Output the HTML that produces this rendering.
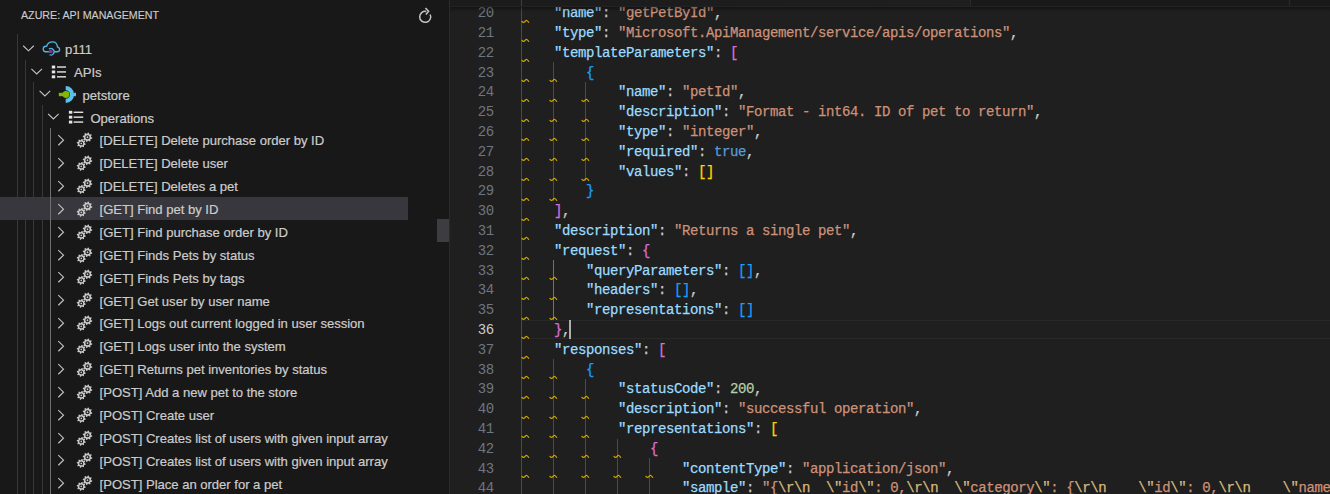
<!DOCTYPE html>
<html><head><meta charset="utf-8"><style>
*{margin:0;padding:0;box-sizing:border-box}
html,body{width:1330px;height:494px;overflow:hidden;background:#181818}
body{position:relative;font-family:"Liberation Sans",sans-serif}
#side{position:absolute;left:0;top:0;width:449px;height:494px;background:#181818;overflow:hidden}
#sborder{position:absolute;left:449px;top:0;width:1px;height:494px;background:#2b2b2b}
.hdr{position:absolute;left:21px;top:7.0px;font-size:11.6px;line-height:16px;color:#cccccc;letter-spacing:0px;transform:scaleX(0.92);transform-origin:0 0;-webkit-text-stroke:0.15px currentColor;white-space:nowrap}
.refresh{position:absolute;left:410px;top:0px}
.row{position:absolute;left:0;width:449px;height:22.88px}
.rsvg{position:absolute;left:0;top:0;overflow:visible}
.lbl{position:absolute;top:2.3px;-webkit-text-stroke:0.2px currentColor;font-size:13.1px;letter-spacing:-0.03px;line-height:22.88px;color:#cccccc;white-space:nowrap}
.hover{position:absolute;left:0;width:408px;height:22.88px;background:#37373d}
.tguide{position:absolute;width:1px}
.slider{position:absolute;left:437px;top:219.1px;width:12px;height:22.7px;background:#3c3c41}
#ed{position:absolute;left:450px;top:0;width:880px;height:494px;background:#1f1f1f;overflow:hidden}
#edc{position:absolute;left:-450px;top:0;width:1330px;height:494px}
.lnum{position:absolute;left:450px;width:43.7px;text-align:right;font-family:"Liberation Mono",monospace;font-size:14px;letter-spacing:-0.4px;line-height:19.8px;color:#6e7681;height:19.8px}
.lnum.act{color:#cccccc}
.code{position:absolute;white-space:pre;-webkit-text-stroke:0.25px currentColor;font-family:"Liberation Mono",monospace;font-size:14px;letter-spacing:-0.4px;line-height:19.8px;color:#cccccc;height:19.8px}
.k{color:#9cdcfe} .s{color:#ce9178} .e{color:#d7ba7d} .n{color:#b5cea8} .b{color:#569cd6}
.sq{position:absolute;overflow:visible}
.guide{position:absolute;width:1px}
.curline{position:absolute;left:522px;width:808px;height:19.8px;border-top:1px solid #282828;border-bottom:1px solid #282828}
.cursor{position:absolute;width:2px;background:#aeafad}
.band{position:absolute;left:450px;top:0;width:880px;height:6px;background:linear-gradient(90deg,#1b1b1b 0px,#1e1e1e 450px,#1f1f1f 520px,#191919 520px)}
.bandline{position:absolute;left:450px;top:6px;width:880px;height:1px;background:#232323}
.shadow{position:absolute;left:450px;top:7px;width:880px;height:5px;background:linear-gradient(rgba(0,0,0,0.35),rgba(0,0,0,0))}
</style></head><body>
<div id="side">
<div class="hdr">AZURE: API MANAGEMENT</div>
<svg class="refresh" width="30" height="30" viewBox="410 0 30 30"><path d="M430.18 14.53 A5.5 5.5 0 1 1 426.25 11.45" fill="none" stroke="#c5c5c5" stroke-width="1.5"/><path d="M425.4 7.9 L428.6 11.3 L425.9 14.4" fill="none" stroke="#c5c5c5" stroke-width="1.5"/></svg>
<div class="hover" style="top:196.80px"></div>
<div class="tguide" style="left:17px;top:34.4px;height:460px;background:#383838"></div>
<div class="tguide" style="left:25px;top:59.52px;height:460px;background:#383838"></div>
<div class="tguide" style="left:33px;top:82.40px;height:460px;background:#383838"></div>
<div class="tguide" style="left:41.5px;top:105.28px;height:460px;background:#383838"></div>
<div class="tguide" style="left:50px;top:128.16px;height:460px;background:#707070"></div>
<div class="row" style="top:36.64px"><svg class="rsvg" width="100" height="23" viewBox="0 0 100 23"><path d="M23.20 8.76 L28.50 13.86 L33.80 8.76" fill="none" stroke="#c5c5c5" stroke-width="1.1"/><path d="M49.20 14.76 L45.60 14.76 C44.00 14.76 43.20 13.56 43.20 12.06 C43.20 10.46 44.50 9.26 46.20 9.26 L46.70 9.26 C47.30 6.76 49.60 4.86 52.50 4.86 C55.30 4.86 57.20 6.96 57.40 9.86 C58.70 10.16 59.60 11.26 59.60 12.56 C59.60 13.86 58.60 14.76 57.30 14.76 L54.20 14.76" fill="none" stroke="#4db6e2" stroke-width="1.3" stroke-linejoin="round"/><path d="M48.91 12.06 A3.3 3.3 0 1 1 49.41 17.75" fill="none" stroke="#4db6e2" stroke-width="1.3"/><circle cx="50.7" cy="14.46" r="1.85" fill="#8b2c9f"/></svg><div class="lbl" style="left:64.9px">p111</div></div><div class="row" style="top:59.52px"><svg class="rsvg" width="100" height="23" viewBox="0 0 100 23"><path d="M31.40 8.78 L36.70 13.88 L42.00 8.78" fill="none" stroke="#c5c5c5" stroke-width="1.1"/><rect x="51.80" y="5.58" width="3.4" height="2.9" fill="#e6e6e6"/><rect x="57.00" y="6.33" width="9.00" height="1.4" fill="#e6e6e6"/><rect x="51.80" y="10.48" width="3.4" height="2.9" fill="#e6e6e6"/><rect x="57.00" y="11.23" width="9.00" height="1.4" fill="#e6e6e6"/><rect x="51.80" y="15.38" width="3.4" height="2.9" fill="#e6e6e6"/><rect x="57.00" y="16.13" width="9.00" height="1.4" fill="#e6e6e6"/></svg><div class="lbl" style="left:74.1px">APIs</div></div><div class="row" style="top:82.40px"><svg class="rsvg" width="100" height="23" viewBox="0 0 100 23"><path d="M39.60 8.90 L44.90 14.00 L50.20 8.90" fill="none" stroke="#c5c5c5" stroke-width="1.1"/><path d="M65.70 4.10 A8.4 8.4 0 0 1 74.10 12.50 A8.4 8.4 0 0 1 65.70 20.90 L65.70 16.80 A4.3 4.3 0 0 0 65.70 8.20 Z" fill="#5bc1ea"/><rect x="73.6" y="10.80" width="2.4" height="3.4" fill="#5bc1ea"/><rect x="58.8" y="10.80" width="5" height="3.4" fill="#7fba00"/><circle cx="66.0" cy="12.50" r="3.45" fill="#7fba00"/></svg><div class="lbl" style="left:82.6px">petstore</div></div><div class="row" style="top:105.28px"><svg class="rsvg" width="100" height="23" viewBox="0 0 100 23"><path d="M48.10 8.82 L53.40 13.92 L58.70 8.82" fill="none" stroke="#c5c5c5" stroke-width="1.1"/><rect x="68.90" y="5.82" width="3.4" height="2.9" fill="#e6e6e6"/><rect x="73.60" y="6.57" width="9.60" height="1.4" fill="#e6e6e6"/><rect x="68.90" y="10.72" width="3.4" height="2.9" fill="#e6e6e6"/><rect x="73.60" y="11.47" width="9.60" height="1.4" fill="#e6e6e6"/><rect x="68.90" y="15.62" width="3.4" height="2.9" fill="#e6e6e6"/><rect x="73.60" y="16.37" width="9.60" height="1.4" fill="#e6e6e6"/></svg><div class="lbl" style="left:90.4px">Operations</div></div><div class="row" style="top:128.16px"><svg class="rsvg" width="100" height="23" viewBox="0 0 100 23"><path d="M58.30 7.14 L63.50 12.19 L58.30 17.24" fill="none" stroke="#c5c5c5" stroke-width="1.1"/><path d="M87.97 4.46 L88.89 4.65 L89.20 6.07 L89.78 6.46 L91.21 6.19 L91.73 6.98 L90.94 8.19 L91.08 8.89 L92.28 9.71 L92.09 10.63 L90.67 10.94 L90.28 11.52 L90.55 12.95 L89.76 13.47 L88.55 12.68 L87.85 12.82 L87.03 14.02 L86.11 13.83 L85.80 12.41 L85.22 12.02 L83.79 12.29 L83.27 11.50 L84.06 10.29 L83.92 9.59 L82.72 8.77 L82.91 7.85 L84.33 7.54 L84.72 6.96 L84.45 5.53 L85.24 5.01 L86.45 5.80 L87.15 5.66 Z M89.60 9.24 A2.1 2.1 0 1 0 85.40 9.24 A2.1 2.1 0 1 0 89.60 9.24 Z" fill="#c8c8c8" fill-rule="evenodd"/><circle cx="87.5" cy="9.24" r="0.9" fill="#c8c8c8"/><path d="M81.69 10.91 L82.56 11.08 L82.83 12.44 L83.38 12.80 L84.73 12.54 L85.22 13.27 L84.46 14.42 L84.58 15.06 L85.73 15.83 L85.56 16.70 L84.20 16.97 L83.84 17.52 L84.10 18.87 L83.37 19.36 L82.22 18.60 L81.58 18.72 L80.81 19.87 L79.94 19.70 L79.67 18.34 L79.12 17.98 L77.77 18.24 L77.28 17.51 L78.04 16.36 L77.92 15.72 L76.77 14.95 L76.94 14.08 L78.30 13.81 L78.66 13.26 L78.40 11.91 L79.13 11.42 L80.28 12.18 L80.92 12.06 Z M83.20 15.39 A1.95 1.95 0 1 0 79.30 15.39 A1.95 1.95 0 1 0 83.20 15.39 Z" fill="#c8c8c8" fill-rule="evenodd"/><circle cx="81.25" cy="15.39" r="0.85" fill="#c8c8c8"/></svg><div class="lbl" style="left:99.6px">[DELETE] Delete purchase order by ID</div></div><div class="row" style="top:151.04px"><svg class="rsvg" width="100" height="23" viewBox="0 0 100 23"><path d="M58.30 7.14 L63.50 12.19 L58.30 17.24" fill="none" stroke="#c5c5c5" stroke-width="1.1"/><path d="M87.97 4.46 L88.89 4.65 L89.20 6.07 L89.78 6.46 L91.21 6.19 L91.73 6.98 L90.94 8.19 L91.08 8.89 L92.28 9.71 L92.09 10.63 L90.67 10.94 L90.28 11.52 L90.55 12.95 L89.76 13.47 L88.55 12.68 L87.85 12.82 L87.03 14.02 L86.11 13.83 L85.80 12.41 L85.22 12.02 L83.79 12.29 L83.27 11.50 L84.06 10.29 L83.92 9.59 L82.72 8.77 L82.91 7.85 L84.33 7.54 L84.72 6.96 L84.45 5.53 L85.24 5.01 L86.45 5.80 L87.15 5.66 Z M89.60 9.24 A2.1 2.1 0 1 0 85.40 9.24 A2.1 2.1 0 1 0 89.60 9.24 Z" fill="#c8c8c8" fill-rule="evenodd"/><circle cx="87.5" cy="9.24" r="0.9" fill="#c8c8c8"/><path d="M81.69 10.91 L82.56 11.08 L82.83 12.44 L83.38 12.80 L84.73 12.54 L85.22 13.27 L84.46 14.42 L84.58 15.06 L85.73 15.83 L85.56 16.70 L84.20 16.97 L83.84 17.52 L84.10 18.87 L83.37 19.36 L82.22 18.60 L81.58 18.72 L80.81 19.87 L79.94 19.70 L79.67 18.34 L79.12 17.98 L77.77 18.24 L77.28 17.51 L78.04 16.36 L77.92 15.72 L76.77 14.95 L76.94 14.08 L78.30 13.81 L78.66 13.26 L78.40 11.91 L79.13 11.42 L80.28 12.18 L80.92 12.06 Z M83.20 15.39 A1.95 1.95 0 1 0 79.30 15.39 A1.95 1.95 0 1 0 83.20 15.39 Z" fill="#c8c8c8" fill-rule="evenodd"/><circle cx="81.25" cy="15.39" r="0.85" fill="#c8c8c8"/></svg><div class="lbl" style="left:99.6px">[DELETE] Delete user</div></div><div class="row" style="top:173.92px"><svg class="rsvg" width="100" height="23" viewBox="0 0 100 23"><path d="M58.30 7.14 L63.50 12.19 L58.30 17.24" fill="none" stroke="#c5c5c5" stroke-width="1.1"/><path d="M87.97 4.46 L88.89 4.65 L89.20 6.07 L89.78 6.46 L91.21 6.19 L91.73 6.98 L90.94 8.19 L91.08 8.89 L92.28 9.71 L92.09 10.63 L90.67 10.94 L90.28 11.52 L90.55 12.95 L89.76 13.47 L88.55 12.68 L87.85 12.82 L87.03 14.02 L86.11 13.83 L85.80 12.41 L85.22 12.02 L83.79 12.29 L83.27 11.50 L84.06 10.29 L83.92 9.59 L82.72 8.77 L82.91 7.85 L84.33 7.54 L84.72 6.96 L84.45 5.53 L85.24 5.01 L86.45 5.80 L87.15 5.66 Z M89.60 9.24 A2.1 2.1 0 1 0 85.40 9.24 A2.1 2.1 0 1 0 89.60 9.24 Z" fill="#c8c8c8" fill-rule="evenodd"/><circle cx="87.5" cy="9.24" r="0.9" fill="#c8c8c8"/><path d="M81.69 10.91 L82.56 11.08 L82.83 12.44 L83.38 12.80 L84.73 12.54 L85.22 13.27 L84.46 14.42 L84.58 15.06 L85.73 15.83 L85.56 16.70 L84.20 16.97 L83.84 17.52 L84.10 18.87 L83.37 19.36 L82.22 18.60 L81.58 18.72 L80.81 19.87 L79.94 19.70 L79.67 18.34 L79.12 17.98 L77.77 18.24 L77.28 17.51 L78.04 16.36 L77.92 15.72 L76.77 14.95 L76.94 14.08 L78.30 13.81 L78.66 13.26 L78.40 11.91 L79.13 11.42 L80.28 12.18 L80.92 12.06 Z M83.20 15.39 A1.95 1.95 0 1 0 79.30 15.39 A1.95 1.95 0 1 0 83.20 15.39 Z" fill="#c8c8c8" fill-rule="evenodd"/><circle cx="81.25" cy="15.39" r="0.85" fill="#c8c8c8"/></svg><div class="lbl" style="left:99.6px">[DELETE] Deletes a pet</div></div><div class="row" style="top:196.80px"><svg class="rsvg" width="100" height="23" viewBox="0 0 100 23"><path d="M58.30 7.14 L63.50 12.19 L58.30 17.24" fill="none" stroke="#c5c5c5" stroke-width="1.1"/><path d="M87.97 4.46 L88.89 4.65 L89.20 6.07 L89.78 6.46 L91.21 6.19 L91.73 6.98 L90.94 8.19 L91.08 8.89 L92.28 9.71 L92.09 10.63 L90.67 10.94 L90.28 11.52 L90.55 12.95 L89.76 13.47 L88.55 12.68 L87.85 12.82 L87.03 14.02 L86.11 13.83 L85.80 12.41 L85.22 12.02 L83.79 12.29 L83.27 11.50 L84.06 10.29 L83.92 9.59 L82.72 8.77 L82.91 7.85 L84.33 7.54 L84.72 6.96 L84.45 5.53 L85.24 5.01 L86.45 5.80 L87.15 5.66 Z M89.60 9.24 A2.1 2.1 0 1 0 85.40 9.24 A2.1 2.1 0 1 0 89.60 9.24 Z" fill="#c8c8c8" fill-rule="evenodd"/><circle cx="87.5" cy="9.24" r="0.9" fill="#c8c8c8"/><path d="M81.69 10.91 L82.56 11.08 L82.83 12.44 L83.38 12.80 L84.73 12.54 L85.22 13.27 L84.46 14.42 L84.58 15.06 L85.73 15.83 L85.56 16.70 L84.20 16.97 L83.84 17.52 L84.10 18.87 L83.37 19.36 L82.22 18.60 L81.58 18.72 L80.81 19.87 L79.94 19.70 L79.67 18.34 L79.12 17.98 L77.77 18.24 L77.28 17.51 L78.04 16.36 L77.92 15.72 L76.77 14.95 L76.94 14.08 L78.30 13.81 L78.66 13.26 L78.40 11.91 L79.13 11.42 L80.28 12.18 L80.92 12.06 Z M83.20 15.39 A1.95 1.95 0 1 0 79.30 15.39 A1.95 1.95 0 1 0 83.20 15.39 Z" fill="#c8c8c8" fill-rule="evenodd"/><circle cx="81.25" cy="15.39" r="0.85" fill="#c8c8c8"/></svg><div class="lbl" style="left:99.6px">[GET] Find pet by ID</div></div><div class="row" style="top:219.68px"><svg class="rsvg" width="100" height="23" viewBox="0 0 100 23"><path d="M58.30 7.14 L63.50 12.19 L58.30 17.24" fill="none" stroke="#c5c5c5" stroke-width="1.1"/><path d="M87.97 4.46 L88.89 4.65 L89.20 6.07 L89.78 6.46 L91.21 6.19 L91.73 6.98 L90.94 8.19 L91.08 8.89 L92.28 9.71 L92.09 10.63 L90.67 10.94 L90.28 11.52 L90.55 12.95 L89.76 13.47 L88.55 12.68 L87.85 12.82 L87.03 14.02 L86.11 13.83 L85.80 12.41 L85.22 12.02 L83.79 12.29 L83.27 11.50 L84.06 10.29 L83.92 9.59 L82.72 8.77 L82.91 7.85 L84.33 7.54 L84.72 6.96 L84.45 5.53 L85.24 5.01 L86.45 5.80 L87.15 5.66 Z M89.60 9.24 A2.1 2.1 0 1 0 85.40 9.24 A2.1 2.1 0 1 0 89.60 9.24 Z" fill="#c8c8c8" fill-rule="evenodd"/><circle cx="87.5" cy="9.24" r="0.9" fill="#c8c8c8"/><path d="M81.69 10.91 L82.56 11.08 L82.83 12.44 L83.38 12.80 L84.73 12.54 L85.22 13.27 L84.46 14.42 L84.58 15.06 L85.73 15.83 L85.56 16.70 L84.20 16.97 L83.84 17.52 L84.10 18.87 L83.37 19.36 L82.22 18.60 L81.58 18.72 L80.81 19.87 L79.94 19.70 L79.67 18.34 L79.12 17.98 L77.77 18.24 L77.28 17.51 L78.04 16.36 L77.92 15.72 L76.77 14.95 L76.94 14.08 L78.30 13.81 L78.66 13.26 L78.40 11.91 L79.13 11.42 L80.28 12.18 L80.92 12.06 Z M83.20 15.39 A1.95 1.95 0 1 0 79.30 15.39 A1.95 1.95 0 1 0 83.20 15.39 Z" fill="#c8c8c8" fill-rule="evenodd"/><circle cx="81.25" cy="15.39" r="0.85" fill="#c8c8c8"/></svg><div class="lbl" style="left:99.6px">[GET] Find purchase order by ID</div></div><div class="row" style="top:242.56px"><svg class="rsvg" width="100" height="23" viewBox="0 0 100 23"><path d="M58.30 7.14 L63.50 12.19 L58.30 17.24" fill="none" stroke="#c5c5c5" stroke-width="1.1"/><path d="M87.97 4.46 L88.89 4.65 L89.20 6.07 L89.78 6.46 L91.21 6.19 L91.73 6.98 L90.94 8.19 L91.08 8.89 L92.28 9.71 L92.09 10.63 L90.67 10.94 L90.28 11.52 L90.55 12.95 L89.76 13.47 L88.55 12.68 L87.85 12.82 L87.03 14.02 L86.11 13.83 L85.80 12.41 L85.22 12.02 L83.79 12.29 L83.27 11.50 L84.06 10.29 L83.92 9.59 L82.72 8.77 L82.91 7.85 L84.33 7.54 L84.72 6.96 L84.45 5.53 L85.24 5.01 L86.45 5.80 L87.15 5.66 Z M89.60 9.24 A2.1 2.1 0 1 0 85.40 9.24 A2.1 2.1 0 1 0 89.60 9.24 Z" fill="#c8c8c8" fill-rule="evenodd"/><circle cx="87.5" cy="9.24" r="0.9" fill="#c8c8c8"/><path d="M81.69 10.91 L82.56 11.08 L82.83 12.44 L83.38 12.80 L84.73 12.54 L85.22 13.27 L84.46 14.42 L84.58 15.06 L85.73 15.83 L85.56 16.70 L84.20 16.97 L83.84 17.52 L84.10 18.87 L83.37 19.36 L82.22 18.60 L81.58 18.72 L80.81 19.87 L79.94 19.70 L79.67 18.34 L79.12 17.98 L77.77 18.24 L77.28 17.51 L78.04 16.36 L77.92 15.72 L76.77 14.95 L76.94 14.08 L78.30 13.81 L78.66 13.26 L78.40 11.91 L79.13 11.42 L80.28 12.18 L80.92 12.06 Z M83.20 15.39 A1.95 1.95 0 1 0 79.30 15.39 A1.95 1.95 0 1 0 83.20 15.39 Z" fill="#c8c8c8" fill-rule="evenodd"/><circle cx="81.25" cy="15.39" r="0.85" fill="#c8c8c8"/></svg><div class="lbl" style="left:99.6px">[GET] Finds Pets by status</div></div><div class="row" style="top:265.44px"><svg class="rsvg" width="100" height="23" viewBox="0 0 100 23"><path d="M58.30 7.14 L63.50 12.19 L58.30 17.24" fill="none" stroke="#c5c5c5" stroke-width="1.1"/><path d="M87.97 4.46 L88.89 4.65 L89.20 6.07 L89.78 6.46 L91.21 6.19 L91.73 6.98 L90.94 8.19 L91.08 8.89 L92.28 9.71 L92.09 10.63 L90.67 10.94 L90.28 11.52 L90.55 12.95 L89.76 13.47 L88.55 12.68 L87.85 12.82 L87.03 14.02 L86.11 13.83 L85.80 12.41 L85.22 12.02 L83.79 12.29 L83.27 11.50 L84.06 10.29 L83.92 9.59 L82.72 8.77 L82.91 7.85 L84.33 7.54 L84.72 6.96 L84.45 5.53 L85.24 5.01 L86.45 5.80 L87.15 5.66 Z M89.60 9.24 A2.1 2.1 0 1 0 85.40 9.24 A2.1 2.1 0 1 0 89.60 9.24 Z" fill="#c8c8c8" fill-rule="evenodd"/><circle cx="87.5" cy="9.24" r="0.9" fill="#c8c8c8"/><path d="M81.69 10.91 L82.56 11.08 L82.83 12.44 L83.38 12.80 L84.73 12.54 L85.22 13.27 L84.46 14.42 L84.58 15.06 L85.73 15.83 L85.56 16.70 L84.20 16.97 L83.84 17.52 L84.10 18.87 L83.37 19.36 L82.22 18.60 L81.58 18.72 L80.81 19.87 L79.94 19.70 L79.67 18.34 L79.12 17.98 L77.77 18.24 L77.28 17.51 L78.04 16.36 L77.92 15.72 L76.77 14.95 L76.94 14.08 L78.30 13.81 L78.66 13.26 L78.40 11.91 L79.13 11.42 L80.28 12.18 L80.92 12.06 Z M83.20 15.39 A1.95 1.95 0 1 0 79.30 15.39 A1.95 1.95 0 1 0 83.20 15.39 Z" fill="#c8c8c8" fill-rule="evenodd"/><circle cx="81.25" cy="15.39" r="0.85" fill="#c8c8c8"/></svg><div class="lbl" style="left:99.6px">[GET] Finds Pets by tags</div></div><div class="row" style="top:288.32px"><svg class="rsvg" width="100" height="23" viewBox="0 0 100 23"><path d="M58.30 7.14 L63.50 12.19 L58.30 17.24" fill="none" stroke="#c5c5c5" stroke-width="1.1"/><path d="M87.97 4.46 L88.89 4.65 L89.20 6.07 L89.78 6.46 L91.21 6.19 L91.73 6.98 L90.94 8.19 L91.08 8.89 L92.28 9.71 L92.09 10.63 L90.67 10.94 L90.28 11.52 L90.55 12.95 L89.76 13.47 L88.55 12.68 L87.85 12.82 L87.03 14.02 L86.11 13.83 L85.80 12.41 L85.22 12.02 L83.79 12.29 L83.27 11.50 L84.06 10.29 L83.92 9.59 L82.72 8.77 L82.91 7.85 L84.33 7.54 L84.72 6.96 L84.45 5.53 L85.24 5.01 L86.45 5.80 L87.15 5.66 Z M89.60 9.24 A2.1 2.1 0 1 0 85.40 9.24 A2.1 2.1 0 1 0 89.60 9.24 Z" fill="#c8c8c8" fill-rule="evenodd"/><circle cx="87.5" cy="9.24" r="0.9" fill="#c8c8c8"/><path d="M81.69 10.91 L82.56 11.08 L82.83 12.44 L83.38 12.80 L84.73 12.54 L85.22 13.27 L84.46 14.42 L84.58 15.06 L85.73 15.83 L85.56 16.70 L84.20 16.97 L83.84 17.52 L84.10 18.87 L83.37 19.36 L82.22 18.60 L81.58 18.72 L80.81 19.87 L79.94 19.70 L79.67 18.34 L79.12 17.98 L77.77 18.24 L77.28 17.51 L78.04 16.36 L77.92 15.72 L76.77 14.95 L76.94 14.08 L78.30 13.81 L78.66 13.26 L78.40 11.91 L79.13 11.42 L80.28 12.18 L80.92 12.06 Z M83.20 15.39 A1.95 1.95 0 1 0 79.30 15.39 A1.95 1.95 0 1 0 83.20 15.39 Z" fill="#c8c8c8" fill-rule="evenodd"/><circle cx="81.25" cy="15.39" r="0.85" fill="#c8c8c8"/></svg><div class="lbl" style="left:99.6px">[GET] Get user by user name</div></div><div class="row" style="top:311.20px"><svg class="rsvg" width="100" height="23" viewBox="0 0 100 23"><path d="M58.30 7.14 L63.50 12.19 L58.30 17.24" fill="none" stroke="#c5c5c5" stroke-width="1.1"/><path d="M87.97 4.46 L88.89 4.65 L89.20 6.07 L89.78 6.46 L91.21 6.19 L91.73 6.98 L90.94 8.19 L91.08 8.89 L92.28 9.71 L92.09 10.63 L90.67 10.94 L90.28 11.52 L90.55 12.95 L89.76 13.47 L88.55 12.68 L87.85 12.82 L87.03 14.02 L86.11 13.83 L85.80 12.41 L85.22 12.02 L83.79 12.29 L83.27 11.50 L84.06 10.29 L83.92 9.59 L82.72 8.77 L82.91 7.85 L84.33 7.54 L84.72 6.96 L84.45 5.53 L85.24 5.01 L86.45 5.80 L87.15 5.66 Z M89.60 9.24 A2.1 2.1 0 1 0 85.40 9.24 A2.1 2.1 0 1 0 89.60 9.24 Z" fill="#c8c8c8" fill-rule="evenodd"/><circle cx="87.5" cy="9.24" r="0.9" fill="#c8c8c8"/><path d="M81.69 10.91 L82.56 11.08 L82.83 12.44 L83.38 12.80 L84.73 12.54 L85.22 13.27 L84.46 14.42 L84.58 15.06 L85.73 15.83 L85.56 16.70 L84.20 16.97 L83.84 17.52 L84.10 18.87 L83.37 19.36 L82.22 18.60 L81.58 18.72 L80.81 19.87 L79.94 19.70 L79.67 18.34 L79.12 17.98 L77.77 18.24 L77.28 17.51 L78.04 16.36 L77.92 15.72 L76.77 14.95 L76.94 14.08 L78.30 13.81 L78.66 13.26 L78.40 11.91 L79.13 11.42 L80.28 12.18 L80.92 12.06 Z M83.20 15.39 A1.95 1.95 0 1 0 79.30 15.39 A1.95 1.95 0 1 0 83.20 15.39 Z" fill="#c8c8c8" fill-rule="evenodd"/><circle cx="81.25" cy="15.39" r="0.85" fill="#c8c8c8"/></svg><div class="lbl" style="left:99.6px">[GET] Logs out current logged in user session</div></div><div class="row" style="top:334.08px"><svg class="rsvg" width="100" height="23" viewBox="0 0 100 23"><path d="M58.30 7.14 L63.50 12.19 L58.30 17.24" fill="none" stroke="#c5c5c5" stroke-width="1.1"/><path d="M87.97 4.46 L88.89 4.65 L89.20 6.07 L89.78 6.46 L91.21 6.19 L91.73 6.98 L90.94 8.19 L91.08 8.89 L92.28 9.71 L92.09 10.63 L90.67 10.94 L90.28 11.52 L90.55 12.95 L89.76 13.47 L88.55 12.68 L87.85 12.82 L87.03 14.02 L86.11 13.83 L85.80 12.41 L85.22 12.02 L83.79 12.29 L83.27 11.50 L84.06 10.29 L83.92 9.59 L82.72 8.77 L82.91 7.85 L84.33 7.54 L84.72 6.96 L84.45 5.53 L85.24 5.01 L86.45 5.80 L87.15 5.66 Z M89.60 9.24 A2.1 2.1 0 1 0 85.40 9.24 A2.1 2.1 0 1 0 89.60 9.24 Z" fill="#c8c8c8" fill-rule="evenodd"/><circle cx="87.5" cy="9.24" r="0.9" fill="#c8c8c8"/><path d="M81.69 10.91 L82.56 11.08 L82.83 12.44 L83.38 12.80 L84.73 12.54 L85.22 13.27 L84.46 14.42 L84.58 15.06 L85.73 15.83 L85.56 16.70 L84.20 16.97 L83.84 17.52 L84.10 18.87 L83.37 19.36 L82.22 18.60 L81.58 18.72 L80.81 19.87 L79.94 19.70 L79.67 18.34 L79.12 17.98 L77.77 18.24 L77.28 17.51 L78.04 16.36 L77.92 15.72 L76.77 14.95 L76.94 14.08 L78.30 13.81 L78.66 13.26 L78.40 11.91 L79.13 11.42 L80.28 12.18 L80.92 12.06 Z M83.20 15.39 A1.95 1.95 0 1 0 79.30 15.39 A1.95 1.95 0 1 0 83.20 15.39 Z" fill="#c8c8c8" fill-rule="evenodd"/><circle cx="81.25" cy="15.39" r="0.85" fill="#c8c8c8"/></svg><div class="lbl" style="left:99.6px">[GET] Logs user into the system</div></div><div class="row" style="top:356.96px"><svg class="rsvg" width="100" height="23" viewBox="0 0 100 23"><path d="M58.30 7.14 L63.50 12.19 L58.30 17.24" fill="none" stroke="#c5c5c5" stroke-width="1.1"/><path d="M87.97 4.46 L88.89 4.65 L89.20 6.07 L89.78 6.46 L91.21 6.19 L91.73 6.98 L90.94 8.19 L91.08 8.89 L92.28 9.71 L92.09 10.63 L90.67 10.94 L90.28 11.52 L90.55 12.95 L89.76 13.47 L88.55 12.68 L87.85 12.82 L87.03 14.02 L86.11 13.83 L85.80 12.41 L85.22 12.02 L83.79 12.29 L83.27 11.50 L84.06 10.29 L83.92 9.59 L82.72 8.77 L82.91 7.85 L84.33 7.54 L84.72 6.96 L84.45 5.53 L85.24 5.01 L86.45 5.80 L87.15 5.66 Z M89.60 9.24 A2.1 2.1 0 1 0 85.40 9.24 A2.1 2.1 0 1 0 89.60 9.24 Z" fill="#c8c8c8" fill-rule="evenodd"/><circle cx="87.5" cy="9.24" r="0.9" fill="#c8c8c8"/><path d="M81.69 10.91 L82.56 11.08 L82.83 12.44 L83.38 12.80 L84.73 12.54 L85.22 13.27 L84.46 14.42 L84.58 15.06 L85.73 15.83 L85.56 16.70 L84.20 16.97 L83.84 17.52 L84.10 18.87 L83.37 19.36 L82.22 18.60 L81.58 18.72 L80.81 19.87 L79.94 19.70 L79.67 18.34 L79.12 17.98 L77.77 18.24 L77.28 17.51 L78.04 16.36 L77.92 15.72 L76.77 14.95 L76.94 14.08 L78.30 13.81 L78.66 13.26 L78.40 11.91 L79.13 11.42 L80.28 12.18 L80.92 12.06 Z M83.20 15.39 A1.95 1.95 0 1 0 79.30 15.39 A1.95 1.95 0 1 0 83.20 15.39 Z" fill="#c8c8c8" fill-rule="evenodd"/><circle cx="81.25" cy="15.39" r="0.85" fill="#c8c8c8"/></svg><div class="lbl" style="left:99.6px">[GET] Returns pet inventories by status</div></div><div class="row" style="top:379.84px"><svg class="rsvg" width="100" height="23" viewBox="0 0 100 23"><path d="M58.30 7.14 L63.50 12.19 L58.30 17.24" fill="none" stroke="#c5c5c5" stroke-width="1.1"/><path d="M87.97 4.46 L88.89 4.65 L89.20 6.07 L89.78 6.46 L91.21 6.19 L91.73 6.98 L90.94 8.19 L91.08 8.89 L92.28 9.71 L92.09 10.63 L90.67 10.94 L90.28 11.52 L90.55 12.95 L89.76 13.47 L88.55 12.68 L87.85 12.82 L87.03 14.02 L86.11 13.83 L85.80 12.41 L85.22 12.02 L83.79 12.29 L83.27 11.50 L84.06 10.29 L83.92 9.59 L82.72 8.77 L82.91 7.85 L84.33 7.54 L84.72 6.96 L84.45 5.53 L85.24 5.01 L86.45 5.80 L87.15 5.66 Z M89.60 9.24 A2.1 2.1 0 1 0 85.40 9.24 A2.1 2.1 0 1 0 89.60 9.24 Z" fill="#c8c8c8" fill-rule="evenodd"/><circle cx="87.5" cy="9.24" r="0.9" fill="#c8c8c8"/><path d="M81.69 10.91 L82.56 11.08 L82.83 12.44 L83.38 12.80 L84.73 12.54 L85.22 13.27 L84.46 14.42 L84.58 15.06 L85.73 15.83 L85.56 16.70 L84.20 16.97 L83.84 17.52 L84.10 18.87 L83.37 19.36 L82.22 18.60 L81.58 18.72 L80.81 19.87 L79.94 19.70 L79.67 18.34 L79.12 17.98 L77.77 18.24 L77.28 17.51 L78.04 16.36 L77.92 15.72 L76.77 14.95 L76.94 14.08 L78.30 13.81 L78.66 13.26 L78.40 11.91 L79.13 11.42 L80.28 12.18 L80.92 12.06 Z M83.20 15.39 A1.95 1.95 0 1 0 79.30 15.39 A1.95 1.95 0 1 0 83.20 15.39 Z" fill="#c8c8c8" fill-rule="evenodd"/><circle cx="81.25" cy="15.39" r="0.85" fill="#c8c8c8"/></svg><div class="lbl" style="left:99.6px">[POST] Add a new pet to the store</div></div><div class="row" style="top:402.72px"><svg class="rsvg" width="100" height="23" viewBox="0 0 100 23"><path d="M58.30 7.14 L63.50 12.19 L58.30 17.24" fill="none" stroke="#c5c5c5" stroke-width="1.1"/><path d="M87.97 4.46 L88.89 4.65 L89.20 6.07 L89.78 6.46 L91.21 6.19 L91.73 6.98 L90.94 8.19 L91.08 8.89 L92.28 9.71 L92.09 10.63 L90.67 10.94 L90.28 11.52 L90.55 12.95 L89.76 13.47 L88.55 12.68 L87.85 12.82 L87.03 14.02 L86.11 13.83 L85.80 12.41 L85.22 12.02 L83.79 12.29 L83.27 11.50 L84.06 10.29 L83.92 9.59 L82.72 8.77 L82.91 7.85 L84.33 7.54 L84.72 6.96 L84.45 5.53 L85.24 5.01 L86.45 5.80 L87.15 5.66 Z M89.60 9.24 A2.1 2.1 0 1 0 85.40 9.24 A2.1 2.1 0 1 0 89.60 9.24 Z" fill="#c8c8c8" fill-rule="evenodd"/><circle cx="87.5" cy="9.24" r="0.9" fill="#c8c8c8"/><path d="M81.69 10.91 L82.56 11.08 L82.83 12.44 L83.38 12.80 L84.73 12.54 L85.22 13.27 L84.46 14.42 L84.58 15.06 L85.73 15.83 L85.56 16.70 L84.20 16.97 L83.84 17.52 L84.10 18.87 L83.37 19.36 L82.22 18.60 L81.58 18.72 L80.81 19.87 L79.94 19.70 L79.67 18.34 L79.12 17.98 L77.77 18.24 L77.28 17.51 L78.04 16.36 L77.92 15.72 L76.77 14.95 L76.94 14.08 L78.30 13.81 L78.66 13.26 L78.40 11.91 L79.13 11.42 L80.28 12.18 L80.92 12.06 Z M83.20 15.39 A1.95 1.95 0 1 0 79.30 15.39 A1.95 1.95 0 1 0 83.20 15.39 Z" fill="#c8c8c8" fill-rule="evenodd"/><circle cx="81.25" cy="15.39" r="0.85" fill="#c8c8c8"/></svg><div class="lbl" style="left:99.6px">[POST] Create user</div></div><div class="row" style="top:425.60px"><svg class="rsvg" width="100" height="23" viewBox="0 0 100 23"><path d="M58.30 7.14 L63.50 12.19 L58.30 17.24" fill="none" stroke="#c5c5c5" stroke-width="1.1"/><path d="M87.97 4.46 L88.89 4.65 L89.20 6.07 L89.78 6.46 L91.21 6.19 L91.73 6.98 L90.94 8.19 L91.08 8.89 L92.28 9.71 L92.09 10.63 L90.67 10.94 L90.28 11.52 L90.55 12.95 L89.76 13.47 L88.55 12.68 L87.85 12.82 L87.03 14.02 L86.11 13.83 L85.80 12.41 L85.22 12.02 L83.79 12.29 L83.27 11.50 L84.06 10.29 L83.92 9.59 L82.72 8.77 L82.91 7.85 L84.33 7.54 L84.72 6.96 L84.45 5.53 L85.24 5.01 L86.45 5.80 L87.15 5.66 Z M89.60 9.24 A2.1 2.1 0 1 0 85.40 9.24 A2.1 2.1 0 1 0 89.60 9.24 Z" fill="#c8c8c8" fill-rule="evenodd"/><circle cx="87.5" cy="9.24" r="0.9" fill="#c8c8c8"/><path d="M81.69 10.91 L82.56 11.08 L82.83 12.44 L83.38 12.80 L84.73 12.54 L85.22 13.27 L84.46 14.42 L84.58 15.06 L85.73 15.83 L85.56 16.70 L84.20 16.97 L83.84 17.52 L84.10 18.87 L83.37 19.36 L82.22 18.60 L81.58 18.72 L80.81 19.87 L79.94 19.70 L79.67 18.34 L79.12 17.98 L77.77 18.24 L77.28 17.51 L78.04 16.36 L77.92 15.72 L76.77 14.95 L76.94 14.08 L78.30 13.81 L78.66 13.26 L78.40 11.91 L79.13 11.42 L80.28 12.18 L80.92 12.06 Z M83.20 15.39 A1.95 1.95 0 1 0 79.30 15.39 A1.95 1.95 0 1 0 83.20 15.39 Z" fill="#c8c8c8" fill-rule="evenodd"/><circle cx="81.25" cy="15.39" r="0.85" fill="#c8c8c8"/></svg><div class="lbl" style="left:99.6px">[POST] Creates list of users with given input array</div></div><div class="row" style="top:448.48px"><svg class="rsvg" width="100" height="23" viewBox="0 0 100 23"><path d="M58.30 7.14 L63.50 12.19 L58.30 17.24" fill="none" stroke="#c5c5c5" stroke-width="1.1"/><path d="M87.97 4.46 L88.89 4.65 L89.20 6.07 L89.78 6.46 L91.21 6.19 L91.73 6.98 L90.94 8.19 L91.08 8.89 L92.28 9.71 L92.09 10.63 L90.67 10.94 L90.28 11.52 L90.55 12.95 L89.76 13.47 L88.55 12.68 L87.85 12.82 L87.03 14.02 L86.11 13.83 L85.80 12.41 L85.22 12.02 L83.79 12.29 L83.27 11.50 L84.06 10.29 L83.92 9.59 L82.72 8.77 L82.91 7.85 L84.33 7.54 L84.72 6.96 L84.45 5.53 L85.24 5.01 L86.45 5.80 L87.15 5.66 Z M89.60 9.24 A2.1 2.1 0 1 0 85.40 9.24 A2.1 2.1 0 1 0 89.60 9.24 Z" fill="#c8c8c8" fill-rule="evenodd"/><circle cx="87.5" cy="9.24" r="0.9" fill="#c8c8c8"/><path d="M81.69 10.91 L82.56 11.08 L82.83 12.44 L83.38 12.80 L84.73 12.54 L85.22 13.27 L84.46 14.42 L84.58 15.06 L85.73 15.83 L85.56 16.70 L84.20 16.97 L83.84 17.52 L84.10 18.87 L83.37 19.36 L82.22 18.60 L81.58 18.72 L80.81 19.87 L79.94 19.70 L79.67 18.34 L79.12 17.98 L77.77 18.24 L77.28 17.51 L78.04 16.36 L77.92 15.72 L76.77 14.95 L76.94 14.08 L78.30 13.81 L78.66 13.26 L78.40 11.91 L79.13 11.42 L80.28 12.18 L80.92 12.06 Z M83.20 15.39 A1.95 1.95 0 1 0 79.30 15.39 A1.95 1.95 0 1 0 83.20 15.39 Z" fill="#c8c8c8" fill-rule="evenodd"/><circle cx="81.25" cy="15.39" r="0.85" fill="#c8c8c8"/></svg><div class="lbl" style="left:99.6px">[POST] Creates list of users with given input array</div></div><div class="row" style="top:471.36px"><svg class="rsvg" width="100" height="23" viewBox="0 0 100 23"><path d="M58.30 7.14 L63.50 12.19 L58.30 17.24" fill="none" stroke="#c5c5c5" stroke-width="1.1"/><path d="M87.97 4.46 L88.89 4.65 L89.20 6.07 L89.78 6.46 L91.21 6.19 L91.73 6.98 L90.94 8.19 L91.08 8.89 L92.28 9.71 L92.09 10.63 L90.67 10.94 L90.28 11.52 L90.55 12.95 L89.76 13.47 L88.55 12.68 L87.85 12.82 L87.03 14.02 L86.11 13.83 L85.80 12.41 L85.22 12.02 L83.79 12.29 L83.27 11.50 L84.06 10.29 L83.92 9.59 L82.72 8.77 L82.91 7.85 L84.33 7.54 L84.72 6.96 L84.45 5.53 L85.24 5.01 L86.45 5.80 L87.15 5.66 Z M89.60 9.24 A2.1 2.1 0 1 0 85.40 9.24 A2.1 2.1 0 1 0 89.60 9.24 Z" fill="#c8c8c8" fill-rule="evenodd"/><circle cx="87.5" cy="9.24" r="0.9" fill="#c8c8c8"/><path d="M81.69 10.91 L82.56 11.08 L82.83 12.44 L83.38 12.80 L84.73 12.54 L85.22 13.27 L84.46 14.42 L84.58 15.06 L85.73 15.83 L85.56 16.70 L84.20 16.97 L83.84 17.52 L84.10 18.87 L83.37 19.36 L82.22 18.60 L81.58 18.72 L80.81 19.87 L79.94 19.70 L79.67 18.34 L79.12 17.98 L77.77 18.24 L77.28 17.51 L78.04 16.36 L77.92 15.72 L76.77 14.95 L76.94 14.08 L78.30 13.81 L78.66 13.26 L78.40 11.91 L79.13 11.42 L80.28 12.18 L80.92 12.06 Z M83.20 15.39 A1.95 1.95 0 1 0 79.30 15.39 A1.95 1.95 0 1 0 83.20 15.39 Z" fill="#c8c8c8" fill-rule="evenodd"/><circle cx="81.25" cy="15.39" r="0.85" fill="#c8c8c8"/></svg><div class="lbl" style="left:99.6px">[POST] Place an order for a pet</div></div>
<div class="slider"></div>
</div>
<div id="sborder"></div>
<div id="ed"><div id="edc">
<div class="curline" style="top:319.70px"></div>
<div class="guide" style="left:521px;top:2.90px;height:495.00px;background:#4a4a4a"></div><div class="guide" style="left:553px;top:62.30px;height:138.60px;background:#4a4a4a"></div><div class="guide" style="left:553px;top:260.30px;height:59.40px;background:#707070"></div><div class="guide" style="left:553px;top:359.30px;height:138.60px;background:#4a4a4a"></div><div class="guide" style="left:585px;top:82.10px;height:99.00px;background:#4a4a4a"></div><div class="guide" style="left:585px;top:379.10px;height:118.80px;background:#4a4a4a"></div><div class="guide" style="left:617px;top:438.50px;height:59.40px;background:#4a4a4a"></div><div class="guide" style="left:649px;top:458.30px;height:39.60px;background:#4a4a4a"></div>
<div class="lnum" style="top:4.10px">20</div><div class="code" style="top:4.10px;left:554px"><span class="k">&quot;name&quot;</span>: <span class="s">&quot;getPetById&quot;</span>,</div><svg class="sq" style="left:521px;top:18.50px" width="10" height="5" viewBox="0 0 10 5"><path d="M1 2.3 Q2.2 4.1 3.5 3.1 Q4.6 1.3 5.4 1.3 Q6.2 1.6 7.7 3.4" fill="none" stroke="#cca700" stroke-width="1.2" stroke-linecap="round"/></svg><div class="lnum" style="top:23.90px">21</div><div class="code" style="top:23.90px;left:554px"><span class="k">&quot;type&quot;</span>: <span class="s">&quot;Microsoft.ApiManagement/service/apis/operations&quot;</span>,</div><svg class="sq" style="left:521px;top:38.30px" width="10" height="5" viewBox="0 0 10 5"><path d="M1 2.3 Q2.2 4.1 3.5 3.1 Q4.6 1.3 5.4 1.3 Q6.2 1.6 7.7 3.4" fill="none" stroke="#cca700" stroke-width="1.2" stroke-linecap="round"/></svg><div class="lnum" style="top:43.70px">22</div><div class="code" style="top:43.70px;left:554px"><span class="k">&quot;templateParameters&quot;</span>: <span style="color:#da70d6">[</span></div><svg class="sq" style="left:521px;top:58.10px" width="10" height="5" viewBox="0 0 10 5"><path d="M1 2.3 Q2.2 4.1 3.5 3.1 Q4.6 1.3 5.4 1.3 Q6.2 1.6 7.7 3.4" fill="none" stroke="#cca700" stroke-width="1.2" stroke-linecap="round"/></svg><div class="lnum" style="top:63.50px">23</div><div class="code" style="top:63.50px;left:586px"><span style="color:#179fff">{</span></div><svg class="sq" style="left:521px;top:77.90px" width="10" height="5" viewBox="0 0 10 5"><path d="M1 2.3 Q2.2 4.1 3.5 3.1 Q4.6 1.3 5.4 1.3 Q6.2 1.6 7.7 3.4" fill="none" stroke="#cca700" stroke-width="1.2" stroke-linecap="round"/></svg><svg class="sq" style="left:548.8px;top:77.90px" width="10" height="5" viewBox="0 0 10 5"><path d="M1 2.3 Q2.2 4.1 3.5 3.1 Q4.6 1.3 5.4 1.3 Q6.2 1.6 7.7 3.4" fill="none" stroke="#cca700" stroke-width="1.2" stroke-linecap="round"/></svg><div class="lnum" style="top:83.30px">24</div><div class="code" style="top:83.30px;left:618px"><span class="k">&quot;name&quot;</span>: <span class="s">&quot;petId&quot;</span>,</div><svg class="sq" style="left:521px;top:97.70px" width="10" height="5" viewBox="0 0 10 5"><path d="M1 2.3 Q2.2 4.1 3.5 3.1 Q4.6 1.3 5.4 1.3 Q6.2 1.6 7.7 3.4" fill="none" stroke="#cca700" stroke-width="1.2" stroke-linecap="round"/></svg><svg class="sq" style="left:548.8px;top:97.70px" width="10" height="5" viewBox="0 0 10 5"><path d="M1 2.3 Q2.2 4.1 3.5 3.1 Q4.6 1.3 5.4 1.3 Q6.2 1.6 7.7 3.4" fill="none" stroke="#cca700" stroke-width="1.2" stroke-linecap="round"/></svg><svg class="sq" style="left:580.8px;top:97.70px" width="10" height="5" viewBox="0 0 10 5"><path d="M1 2.3 Q2.2 4.1 3.5 3.1 Q4.6 1.3 5.4 1.3 Q6.2 1.6 7.7 3.4" fill="none" stroke="#cca700" stroke-width="1.2" stroke-linecap="round"/></svg><div class="lnum" style="top:103.10px">25</div><div class="code" style="top:103.10px;left:618px"><span class="k">&quot;description&quot;</span>: <span class="s">&quot;Format - int64. ID of pet to return&quot;</span>,</div><svg class="sq" style="left:521px;top:117.50px" width="10" height="5" viewBox="0 0 10 5"><path d="M1 2.3 Q2.2 4.1 3.5 3.1 Q4.6 1.3 5.4 1.3 Q6.2 1.6 7.7 3.4" fill="none" stroke="#cca700" stroke-width="1.2" stroke-linecap="round"/></svg><svg class="sq" style="left:548.8px;top:117.50px" width="10" height="5" viewBox="0 0 10 5"><path d="M1 2.3 Q2.2 4.1 3.5 3.1 Q4.6 1.3 5.4 1.3 Q6.2 1.6 7.7 3.4" fill="none" stroke="#cca700" stroke-width="1.2" stroke-linecap="round"/></svg><svg class="sq" style="left:580.8px;top:117.50px" width="10" height="5" viewBox="0 0 10 5"><path d="M1 2.3 Q2.2 4.1 3.5 3.1 Q4.6 1.3 5.4 1.3 Q6.2 1.6 7.7 3.4" fill="none" stroke="#cca700" stroke-width="1.2" stroke-linecap="round"/></svg><div class="lnum" style="top:122.90px">26</div><div class="code" style="top:122.90px;left:618px"><span class="k">&quot;type&quot;</span>: <span class="s">&quot;integer&quot;</span>,</div><svg class="sq" style="left:521px;top:137.30px" width="10" height="5" viewBox="0 0 10 5"><path d="M1 2.3 Q2.2 4.1 3.5 3.1 Q4.6 1.3 5.4 1.3 Q6.2 1.6 7.7 3.4" fill="none" stroke="#cca700" stroke-width="1.2" stroke-linecap="round"/></svg><svg class="sq" style="left:548.8px;top:137.30px" width="10" height="5" viewBox="0 0 10 5"><path d="M1 2.3 Q2.2 4.1 3.5 3.1 Q4.6 1.3 5.4 1.3 Q6.2 1.6 7.7 3.4" fill="none" stroke="#cca700" stroke-width="1.2" stroke-linecap="round"/></svg><svg class="sq" style="left:580.8px;top:137.30px" width="10" height="5" viewBox="0 0 10 5"><path d="M1 2.3 Q2.2 4.1 3.5 3.1 Q4.6 1.3 5.4 1.3 Q6.2 1.6 7.7 3.4" fill="none" stroke="#cca700" stroke-width="1.2" stroke-linecap="round"/></svg><div class="lnum" style="top:142.70px">27</div><div class="code" style="top:142.70px;left:618px"><span class="k">&quot;required&quot;</span>: <span class="b">true</span>,</div><svg class="sq" style="left:521px;top:157.10px" width="10" height="5" viewBox="0 0 10 5"><path d="M1 2.3 Q2.2 4.1 3.5 3.1 Q4.6 1.3 5.4 1.3 Q6.2 1.6 7.7 3.4" fill="none" stroke="#cca700" stroke-width="1.2" stroke-linecap="round"/></svg><svg class="sq" style="left:548.8px;top:157.10px" width="10" height="5" viewBox="0 0 10 5"><path d="M1 2.3 Q2.2 4.1 3.5 3.1 Q4.6 1.3 5.4 1.3 Q6.2 1.6 7.7 3.4" fill="none" stroke="#cca700" stroke-width="1.2" stroke-linecap="round"/></svg><svg class="sq" style="left:580.8px;top:157.10px" width="10" height="5" viewBox="0 0 10 5"><path d="M1 2.3 Q2.2 4.1 3.5 3.1 Q4.6 1.3 5.4 1.3 Q6.2 1.6 7.7 3.4" fill="none" stroke="#cca700" stroke-width="1.2" stroke-linecap="round"/></svg><div class="lnum" style="top:162.50px">28</div><div class="code" style="top:162.50px;left:618px"><span class="k">&quot;values&quot;</span>: <span style="color:#ffd700">[</span><span style="color:#ffd700">]</span></div><svg class="sq" style="left:521px;top:176.90px" width="10" height="5" viewBox="0 0 10 5"><path d="M1 2.3 Q2.2 4.1 3.5 3.1 Q4.6 1.3 5.4 1.3 Q6.2 1.6 7.7 3.4" fill="none" stroke="#cca700" stroke-width="1.2" stroke-linecap="round"/></svg><svg class="sq" style="left:548.8px;top:176.90px" width="10" height="5" viewBox="0 0 10 5"><path d="M1 2.3 Q2.2 4.1 3.5 3.1 Q4.6 1.3 5.4 1.3 Q6.2 1.6 7.7 3.4" fill="none" stroke="#cca700" stroke-width="1.2" stroke-linecap="round"/></svg><svg class="sq" style="left:580.8px;top:176.90px" width="10" height="5" viewBox="0 0 10 5"><path d="M1 2.3 Q2.2 4.1 3.5 3.1 Q4.6 1.3 5.4 1.3 Q6.2 1.6 7.7 3.4" fill="none" stroke="#cca700" stroke-width="1.2" stroke-linecap="round"/></svg><div class="lnum" style="top:182.30px">29</div><div class="code" style="top:182.30px;left:586px"><span style="color:#179fff">}</span></div><svg class="sq" style="left:521px;top:196.70px" width="10" height="5" viewBox="0 0 10 5"><path d="M1 2.3 Q2.2 4.1 3.5 3.1 Q4.6 1.3 5.4 1.3 Q6.2 1.6 7.7 3.4" fill="none" stroke="#cca700" stroke-width="1.2" stroke-linecap="round"/></svg><svg class="sq" style="left:548.8px;top:196.70px" width="10" height="5" viewBox="0 0 10 5"><path d="M1 2.3 Q2.2 4.1 3.5 3.1 Q4.6 1.3 5.4 1.3 Q6.2 1.6 7.7 3.4" fill="none" stroke="#cca700" stroke-width="1.2" stroke-linecap="round"/></svg><div class="lnum" style="top:202.10px">30</div><div class="code" style="top:202.10px;left:554px"><span style="color:#da70d6">]</span>,</div><svg class="sq" style="left:521px;top:216.50px" width="10" height="5" viewBox="0 0 10 5"><path d="M1 2.3 Q2.2 4.1 3.5 3.1 Q4.6 1.3 5.4 1.3 Q6.2 1.6 7.7 3.4" fill="none" stroke="#cca700" stroke-width="1.2" stroke-linecap="round"/></svg><div class="lnum" style="top:221.90px">31</div><div class="code" style="top:221.90px;left:554px"><span class="k">&quot;description&quot;</span>: <span class="s">&quot;Returns a single pet&quot;</span>,</div><svg class="sq" style="left:521px;top:236.30px" width="10" height="5" viewBox="0 0 10 5"><path d="M1 2.3 Q2.2 4.1 3.5 3.1 Q4.6 1.3 5.4 1.3 Q6.2 1.6 7.7 3.4" fill="none" stroke="#cca700" stroke-width="1.2" stroke-linecap="round"/></svg><div class="lnum" style="top:241.70px">32</div><div class="code" style="top:241.70px;left:554px"><span class="k">&quot;request&quot;</span>: <span style="color:#da70d6">{</span></div><svg class="sq" style="left:521px;top:256.10px" width="10" height="5" viewBox="0 0 10 5"><path d="M1 2.3 Q2.2 4.1 3.5 3.1 Q4.6 1.3 5.4 1.3 Q6.2 1.6 7.7 3.4" fill="none" stroke="#cca700" stroke-width="1.2" stroke-linecap="round"/></svg><div class="lnum" style="top:261.50px">33</div><div class="code" style="top:261.50px;left:586px"><span class="k">&quot;queryParameters&quot;</span>: <span style="color:#179fff">[</span><span style="color:#179fff">]</span>,</div><svg class="sq" style="left:521px;top:275.90px" width="10" height="5" viewBox="0 0 10 5"><path d="M1 2.3 Q2.2 4.1 3.5 3.1 Q4.6 1.3 5.4 1.3 Q6.2 1.6 7.7 3.4" fill="none" stroke="#cca700" stroke-width="1.2" stroke-linecap="round"/></svg><svg class="sq" style="left:548.8px;top:275.90px" width="10" height="5" viewBox="0 0 10 5"><path d="M1 2.3 Q2.2 4.1 3.5 3.1 Q4.6 1.3 5.4 1.3 Q6.2 1.6 7.7 3.4" fill="none" stroke="#cca700" stroke-width="1.2" stroke-linecap="round"/></svg><div class="lnum" style="top:281.30px">34</div><div class="code" style="top:281.30px;left:586px"><span class="k">&quot;headers&quot;</span>: <span style="color:#179fff">[</span><span style="color:#179fff">]</span>,</div><svg class="sq" style="left:521px;top:295.70px" width="10" height="5" viewBox="0 0 10 5"><path d="M1 2.3 Q2.2 4.1 3.5 3.1 Q4.6 1.3 5.4 1.3 Q6.2 1.6 7.7 3.4" fill="none" stroke="#cca700" stroke-width="1.2" stroke-linecap="round"/></svg><svg class="sq" style="left:548.8px;top:295.70px" width="10" height="5" viewBox="0 0 10 5"><path d="M1 2.3 Q2.2 4.1 3.5 3.1 Q4.6 1.3 5.4 1.3 Q6.2 1.6 7.7 3.4" fill="none" stroke="#cca700" stroke-width="1.2" stroke-linecap="round"/></svg><div class="lnum" style="top:301.10px">35</div><div class="code" style="top:301.10px;left:586px"><span class="k">&quot;representations&quot;</span>: <span style="color:#179fff">[</span><span style="color:#179fff">]</span></div><svg class="sq" style="left:521px;top:315.50px" width="10" height="5" viewBox="0 0 10 5"><path d="M1 2.3 Q2.2 4.1 3.5 3.1 Q4.6 1.3 5.4 1.3 Q6.2 1.6 7.7 3.4" fill="none" stroke="#cca700" stroke-width="1.2" stroke-linecap="round"/></svg><svg class="sq" style="left:548.8px;top:315.50px" width="10" height="5" viewBox="0 0 10 5"><path d="M1 2.3 Q2.2 4.1 3.5 3.1 Q4.6 1.3 5.4 1.3 Q6.2 1.6 7.7 3.4" fill="none" stroke="#cca700" stroke-width="1.2" stroke-linecap="round"/></svg><div class="lnum act" style="top:320.90px">36</div><div class="code" style="top:320.90px;left:554px"><span style="color:#da70d6">}</span>,</div><svg class="sq" style="left:521px;top:335.30px" width="10" height="5" viewBox="0 0 10 5"><path d="M1 2.3 Q2.2 4.1 3.5 3.1 Q4.6 1.3 5.4 1.3 Q6.2 1.6 7.7 3.4" fill="none" stroke="#cca700" stroke-width="1.2" stroke-linecap="round"/></svg><div class="lnum" style="top:340.70px">37</div><div class="code" style="top:340.70px;left:554px"><span class="k">&quot;responses&quot;</span>: <span style="color:#da70d6">[</span></div><svg class="sq" style="left:521px;top:355.10px" width="10" height="5" viewBox="0 0 10 5"><path d="M1 2.3 Q2.2 4.1 3.5 3.1 Q4.6 1.3 5.4 1.3 Q6.2 1.6 7.7 3.4" fill="none" stroke="#cca700" stroke-width="1.2" stroke-linecap="round"/></svg><div class="lnum" style="top:360.50px">38</div><div class="code" style="top:360.50px;left:586px"><span style="color:#179fff">{</span></div><svg class="sq" style="left:521px;top:374.90px" width="10" height="5" viewBox="0 0 10 5"><path d="M1 2.3 Q2.2 4.1 3.5 3.1 Q4.6 1.3 5.4 1.3 Q6.2 1.6 7.7 3.4" fill="none" stroke="#cca700" stroke-width="1.2" stroke-linecap="round"/></svg><svg class="sq" style="left:548.8px;top:374.90px" width="10" height="5" viewBox="0 0 10 5"><path d="M1 2.3 Q2.2 4.1 3.5 3.1 Q4.6 1.3 5.4 1.3 Q6.2 1.6 7.7 3.4" fill="none" stroke="#cca700" stroke-width="1.2" stroke-linecap="round"/></svg><div class="lnum" style="top:380.30px">39</div><div class="code" style="top:380.30px;left:618px"><span class="k">&quot;statusCode&quot;</span>: <span class="n">200</span>,</div><svg class="sq" style="left:521px;top:394.70px" width="10" height="5" viewBox="0 0 10 5"><path d="M1 2.3 Q2.2 4.1 3.5 3.1 Q4.6 1.3 5.4 1.3 Q6.2 1.6 7.7 3.4" fill="none" stroke="#cca700" stroke-width="1.2" stroke-linecap="round"/></svg><svg class="sq" style="left:548.8px;top:394.70px" width="10" height="5" viewBox="0 0 10 5"><path d="M1 2.3 Q2.2 4.1 3.5 3.1 Q4.6 1.3 5.4 1.3 Q6.2 1.6 7.7 3.4" fill="none" stroke="#cca700" stroke-width="1.2" stroke-linecap="round"/></svg><svg class="sq" style="left:580.8px;top:394.70px" width="10" height="5" viewBox="0 0 10 5"><path d="M1 2.3 Q2.2 4.1 3.5 3.1 Q4.6 1.3 5.4 1.3 Q6.2 1.6 7.7 3.4" fill="none" stroke="#cca700" stroke-width="1.2" stroke-linecap="round"/></svg><div class="lnum" style="top:400.10px">40</div><div class="code" style="top:400.10px;left:618px"><span class="k">&quot;description&quot;</span>: <span class="s">&quot;successful operation&quot;</span>,</div><svg class="sq" style="left:521px;top:414.50px" width="10" height="5" viewBox="0 0 10 5"><path d="M1 2.3 Q2.2 4.1 3.5 3.1 Q4.6 1.3 5.4 1.3 Q6.2 1.6 7.7 3.4" fill="none" stroke="#cca700" stroke-width="1.2" stroke-linecap="round"/></svg><svg class="sq" style="left:548.8px;top:414.50px" width="10" height="5" viewBox="0 0 10 5"><path d="M1 2.3 Q2.2 4.1 3.5 3.1 Q4.6 1.3 5.4 1.3 Q6.2 1.6 7.7 3.4" fill="none" stroke="#cca700" stroke-width="1.2" stroke-linecap="round"/></svg><svg class="sq" style="left:580.8px;top:414.50px" width="10" height="5" viewBox="0 0 10 5"><path d="M1 2.3 Q2.2 4.1 3.5 3.1 Q4.6 1.3 5.4 1.3 Q6.2 1.6 7.7 3.4" fill="none" stroke="#cca700" stroke-width="1.2" stroke-linecap="round"/></svg><div class="lnum" style="top:419.90px">41</div><div class="code" style="top:419.90px;left:618px"><span class="k">&quot;representations&quot;</span>: <span style="color:#ffd700">[</span></div><svg class="sq" style="left:521px;top:434.30px" width="10" height="5" viewBox="0 0 10 5"><path d="M1 2.3 Q2.2 4.1 3.5 3.1 Q4.6 1.3 5.4 1.3 Q6.2 1.6 7.7 3.4" fill="none" stroke="#cca700" stroke-width="1.2" stroke-linecap="round"/></svg><svg class="sq" style="left:548.8px;top:434.30px" width="10" height="5" viewBox="0 0 10 5"><path d="M1 2.3 Q2.2 4.1 3.5 3.1 Q4.6 1.3 5.4 1.3 Q6.2 1.6 7.7 3.4" fill="none" stroke="#cca700" stroke-width="1.2" stroke-linecap="round"/></svg><svg class="sq" style="left:580.8px;top:434.30px" width="10" height="5" viewBox="0 0 10 5"><path d="M1 2.3 Q2.2 4.1 3.5 3.1 Q4.6 1.3 5.4 1.3 Q6.2 1.6 7.7 3.4" fill="none" stroke="#cca700" stroke-width="1.2" stroke-linecap="round"/></svg><div class="lnum" style="top:439.70px">42</div><div class="code" style="top:439.70px;left:650px"><span style="color:#da70d6">{</span></div><svg class="sq" style="left:521px;top:454.10px" width="10" height="5" viewBox="0 0 10 5"><path d="M1 2.3 Q2.2 4.1 3.5 3.1 Q4.6 1.3 5.4 1.3 Q6.2 1.6 7.7 3.4" fill="none" stroke="#cca700" stroke-width="1.2" stroke-linecap="round"/></svg><svg class="sq" style="left:548.8px;top:454.10px" width="10" height="5" viewBox="0 0 10 5"><path d="M1 2.3 Q2.2 4.1 3.5 3.1 Q4.6 1.3 5.4 1.3 Q6.2 1.6 7.7 3.4" fill="none" stroke="#cca700" stroke-width="1.2" stroke-linecap="round"/></svg><svg class="sq" style="left:580.8px;top:454.10px" width="10" height="5" viewBox="0 0 10 5"><path d="M1 2.3 Q2.2 4.1 3.5 3.1 Q4.6 1.3 5.4 1.3 Q6.2 1.6 7.7 3.4" fill="none" stroke="#cca700" stroke-width="1.2" stroke-linecap="round"/></svg><svg class="sq" style="left:612.8px;top:454.10px" width="10" height="5" viewBox="0 0 10 5"><path d="M1 2.3 Q2.2 4.1 3.5 3.1 Q4.6 1.3 5.4 1.3 Q6.2 1.6 7.7 3.4" fill="none" stroke="#cca700" stroke-width="1.2" stroke-linecap="round"/></svg><div class="lnum" style="top:459.50px">43</div><div class="code" style="top:459.50px;left:682px"><span class="k">&quot;contentType&quot;</span>: <span class="s">&quot;application/json&quot;</span>,</div><svg class="sq" style="left:521px;top:473.90px" width="10" height="5" viewBox="0 0 10 5"><path d="M1 2.3 Q2.2 4.1 3.5 3.1 Q4.6 1.3 5.4 1.3 Q6.2 1.6 7.7 3.4" fill="none" stroke="#cca700" stroke-width="1.2" stroke-linecap="round"/></svg><svg class="sq" style="left:548.8px;top:473.90px" width="10" height="5" viewBox="0 0 10 5"><path d="M1 2.3 Q2.2 4.1 3.5 3.1 Q4.6 1.3 5.4 1.3 Q6.2 1.6 7.7 3.4" fill="none" stroke="#cca700" stroke-width="1.2" stroke-linecap="round"/></svg><svg class="sq" style="left:580.8px;top:473.90px" width="10" height="5" viewBox="0 0 10 5"><path d="M1 2.3 Q2.2 4.1 3.5 3.1 Q4.6 1.3 5.4 1.3 Q6.2 1.6 7.7 3.4" fill="none" stroke="#cca700" stroke-width="1.2" stroke-linecap="round"/></svg><svg class="sq" style="left:612.8px;top:473.90px" width="10" height="5" viewBox="0 0 10 5"><path d="M1 2.3 Q2.2 4.1 3.5 3.1 Q4.6 1.3 5.4 1.3 Q6.2 1.6 7.7 3.4" fill="none" stroke="#cca700" stroke-width="1.2" stroke-linecap="round"/></svg><svg class="sq" style="left:644.8px;top:473.90px" width="10" height="5" viewBox="0 0 10 5"><path d="M1 2.3 Q2.2 4.1 3.5 3.1 Q4.6 1.3 5.4 1.3 Q6.2 1.6 7.7 3.4" fill="none" stroke="#cca700" stroke-width="1.2" stroke-linecap="round"/></svg><div class="lnum" style="top:479.30px">44</div><div class="code" style="top:479.30px;left:682px"><span class="k">&quot;sample&quot;</span>: <span class="s">&quot;{<span class="e">\r</span><span class="e">\n</span>  <span class="e">\&quot;</span>id<span class="e">\&quot;</span>: 0,<span class="e">\r</span><span class="e">\n</span>  <span class="e">\&quot;</span>category<span class="e">\&quot;</span>: {<span class="e">\r</span><span class="e">\n</span>    <span class="e">\&quot;</span>id<span class="e">\&quot;</span>: 0,<span class="e">\r</span><span class="e">\n</span>    <span class="e">\&quot;</span>name</span></div><svg class="sq" style="left:521px;top:493.70px" width="10" height="5" viewBox="0 0 10 5"><path d="M1 2.3 Q2.2 4.1 3.5 3.1 Q4.6 1.3 5.4 1.3 Q6.2 1.6 7.7 3.4" fill="none" stroke="#cca700" stroke-width="1.2" stroke-linecap="round"/></svg><svg class="sq" style="left:548.8px;top:493.70px" width="10" height="5" viewBox="0 0 10 5"><path d="M1 2.3 Q2.2 4.1 3.5 3.1 Q4.6 1.3 5.4 1.3 Q6.2 1.6 7.7 3.4" fill="none" stroke="#cca700" stroke-width="1.2" stroke-linecap="round"/></svg><svg class="sq" style="left:580.8px;top:493.70px" width="10" height="5" viewBox="0 0 10 5"><path d="M1 2.3 Q2.2 4.1 3.5 3.1 Q4.6 1.3 5.4 1.3 Q6.2 1.6 7.7 3.4" fill="none" stroke="#cca700" stroke-width="1.2" stroke-linecap="round"/></svg><svg class="sq" style="left:612.8px;top:493.70px" width="10" height="5" viewBox="0 0 10 5"><path d="M1 2.3 Q2.2 4.1 3.5 3.1 Q4.6 1.3 5.4 1.3 Q6.2 1.6 7.7 3.4" fill="none" stroke="#cca700" stroke-width="1.2" stroke-linecap="round"/></svg><svg class="sq" style="left:644.8px;top:493.70px" width="10" height="5" viewBox="0 0 10 5"><path d="M1 2.3 Q2.2 4.1 3.5 3.1 Q4.6 1.3 5.4 1.3 Q6.2 1.6 7.7 3.4" fill="none" stroke="#cca700" stroke-width="1.2" stroke-linecap="round"/></svg>
<div class="cursor" style="left:569px;top:319.70px;height:19.8px"></div>
<div class="band"></div>
<div class="guide" style="left:521px;top:0;height:6px;background:#404040"></div>
<div class="guide" style="left:970px;top:0;height:6px;background:#2a2a2a"></div>
<div class="guide" style="left:1289px;top:0;height:6px;background:#2a2a2a"></div>
<div class="bandline"></div>
<div class="shadow"></div>
</div></div>
</body></html>
